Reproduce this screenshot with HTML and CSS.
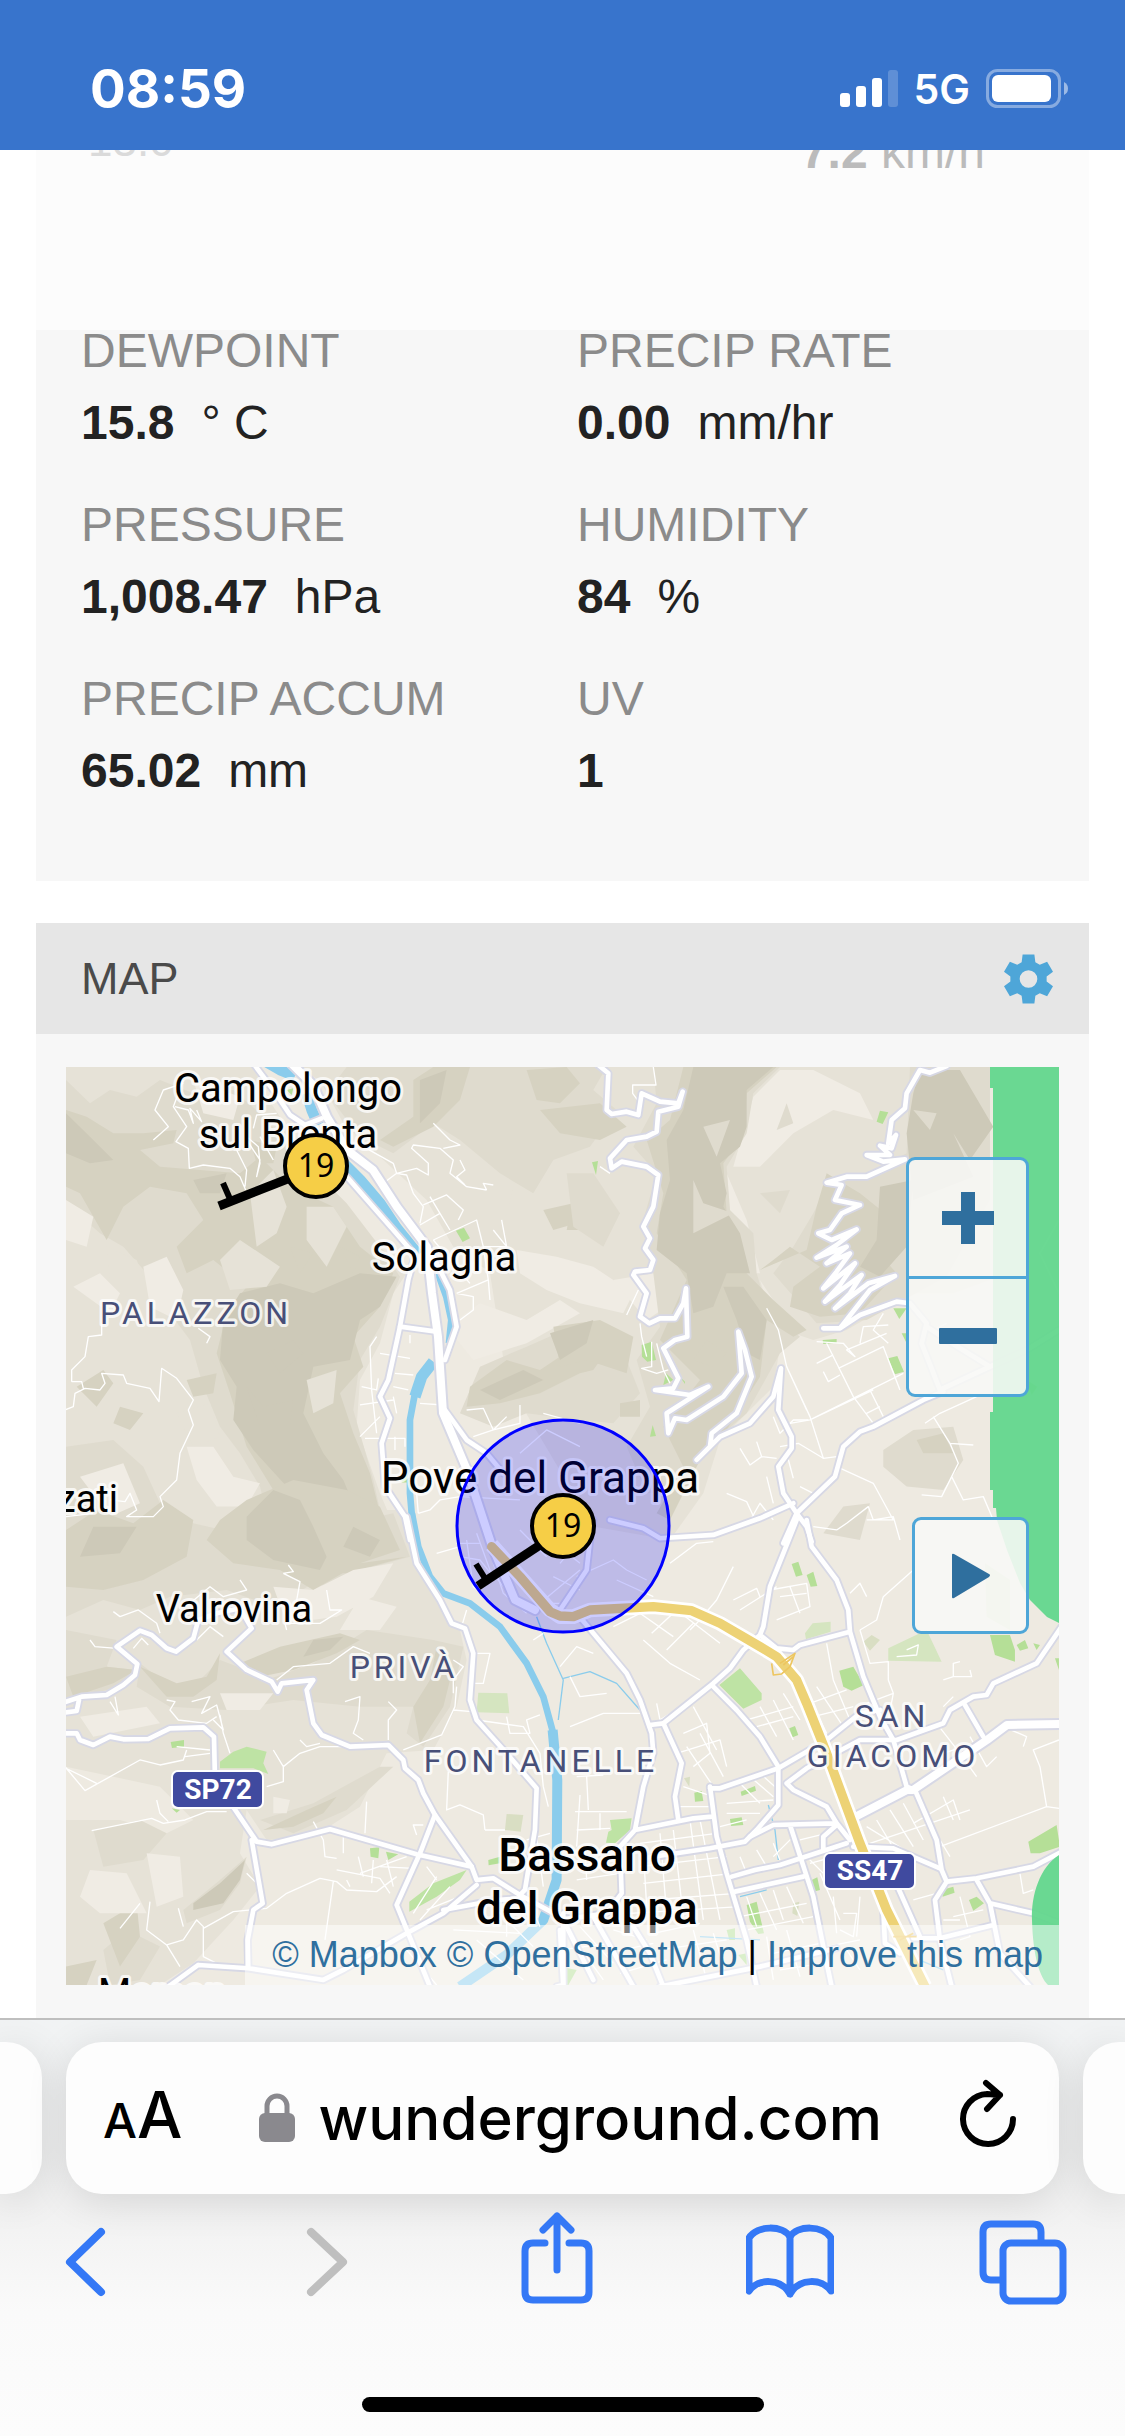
FILE: index.html
```html
<!DOCTYPE html>
<html lang="en">
<head>
<meta charset="utf-8">
<meta name="viewport" content="width=device-width, initial-scale=1">
<title>Weather station</title>
<link rel="stylesheet" href="styles.css">
</head>
<body>
<header class="status">
  <span class="clock">08:59</span>
  <div class="status-right">
    <svg class="signal" viewBox="0 0 58 38" aria-hidden="true"><rect x="0" y="23" width="10" height="14" rx="3"/><rect x="16" y="16" width="10" height="21" rx="3"/><rect x="32" y="8" width="10" height="29" rx="3"/><rect x="48" y="0" width="10" height="37" rx="3" opacity=".2"/></svg>
    <span class="network">5G</span>
    <svg class="battery" viewBox="0 0 83 40" aria-hidden="true"><rect x="1.500" y="1.500" width="72" height="36" rx="10" fill="none" stroke="#fff" stroke-opacity=".4" stroke-width="3"/><rect x="6" y="6" width="59" height="27" rx="6"/><path d="M78 13q4 2 4 6.500t-4 6.500z" opacity=".5"/></svg>
  </div>
</header>

<main class="page">
  <section class="conditions">
    <div class="summary">
      <span class="low">13.0</span>
      <span class="gust"><b>7.2</b> km/h</span>
    </div>
    <dl class="readings">
      <div><dt>DEWPOINT</dt><dd><b>15.8</b><span>° C</span></dd></div>
      <div><dt>PRECIP RATE</dt><dd><b>0.00</b><span>mm/hr</span></dd></div>
      <div><dt>PRESSURE</dt><dd><b>1,008.47</b><span>hPa</span></dd></div>
      <div><dt>HUMIDITY</dt><dd><b>84</b><span>%</span></dd></div>
      <div><dt>PRECIP ACCUM</dt><dd><b>65.02</b><span>mm</span></dd></div>
      <div><dt>UV</dt><dd><b>1</b></dd></div>
    </dl>
  </section>

  <section class="map-card">
    <div class="map-head">
      <h2>MAP</h2>
      <button class="gear" aria-label="Map settings"><svg viewBox="0 0 50 50"><path fill-rule="evenodd" d="M19 0h12l1 8 4.500 2.500L44 7.500l6 10-6.500 5v5l6.500 5-6 10-7.500-3L32 42l-1 8H19l-1-8-4.500-2.500L6 42.500l-6-10 6.500-5v-5L0 17.500l6-10 7.500 3L18 8zM25 16a9 9 0 1 0 0 18a9 9 0 1 0 0-18z"/></svg></button>
    </div>
    <div class="map-body">
      <div class="map">
        <svg class="map-art" viewBox="66 1067 993 918" preserveAspectRatio="xMidYMid slice" role="img" aria-label="Map of Bassano del Grappa">
          <defs>
            <g id="roads">
              <g transform="translate(60 1060) scale(.3333)">
                <path d="M580 10L640 90 690 165 735 195 785 175M860 350L1000 510 1065 585 1045 660 1020 800 985 960 960 1010 990 1075 965 1150 975 1280 1035 1370 1050 1440"/>
                <path d="M1120 590L1170 690 1190 800 1155 900M1020 800L1130 815M1155 1050L1220 1140 1280 1180 1330 1240"/>
              </g>
              <g transform="translate(560 1060) scale(.3333)">
                <path d="M115 15L145 40 140 150 155 162 200 155 235 165 245 100 300 125 355 130 368 95 355 140 295 155 290 215 260 230 200 240 150 295 155 325 185 305 260 320 295 345 280 440 250 500 270 535 255 565 280 600 270 630 225 635 220 645 260 700 240 770 268 790 300 775 345 775 370 730 378 685 382 830 345 840 310 865 355 955 340 985 285 990 390 1005 445 980 320 1060 325 1120 345 1075 380 1080 490 1010 545 940 535 815 555 870 575 950 530 1060 455 1120 450 1160 410 1200 480 1130 570 1090 640 1010 663 925 655 1050 695 1130 695 1165 655 1220 670 1300 710 1360 740 1400 755 1445"/>
                <path d="M1160 18L1110 38 1080 30 1040 100 1035 145 995 180 985 250 1008 225 995 265 960 257 990 285 920 285 970 305 1035 298 920 350 860 350 800 368 845 375 825 420 900 435 845 460 810 510 775 520 815 540 890 508 830 555 770 593 860 560 800 610 870 580 830 635 790 685 885 610 840 675 795 725 905 645 870 700 825 745 925 670 1005 648 930 690 840 805 790 805M840 805L900 765 1010 725 1050 730 1100 790 1085 850 1140 990 1290 920 1200 865 1100 800M1290 920L1400 870 1497 810"/>
                <path d="M150 1380L250 1405 300 1435 460 1425 600 1375 700 1330M1150 995L1090 1020 940 1100 900 1115 850 1160 825 1250 710 1360 670 1450"/>
              </g>
              <g transform="translate(60 1520) scale(.3333)">
                <path d="M1040 -10L1070 130 1140 240 1175 310 1215 325 1240 400 1230 540 1250 600 1340 700 1430 805 1425 930 1395 1110 1380 1125 1500 1190"/>
                <path d="M10 548L65 530 140 525 190 495 225 465 232 432 170 380 240 332 275 345 320 385 348 395 400 355 415 300 470 280 540 265 575 325 500 395 560 450 635 485 653 515 665 490 760 480 740 510 760 610 785 645 870 680 985 675 1030 720 1035 745 1075 780 1090 820 1125 885 1235 1040 1250 1080 1300 1075 1380 1125M10 578L50 573 57 540"/>
                <path d="M10 640L50 640 60 660 100 675 150 650 190 658 265 657 330 625 430 622 462 650 465 780 590 965 635 973 810 928 1070 1003 1235 1040M575 960L608 1150 580 1170 563 1260 565 1345M325 1400L415 1335 565 1345 790 1380 850 1350 1040 1240 1150 1180 1250 1095M1125 885L1080 1000 1010 1155 1110 1400M1150 1170L1310 1140 1390 1135M1510 1180L1510 1395 1490 1400"/>
              </g>
              <g transform="translate(560 1520) scale(.3333)">
                <path d="M710 0L630 200 610 320 600 345 550 390 510 445 460 490 310 610 270 615M740 0L755 80 830 180 865 270 870 335 910 470 960 590 1000 660 1040 800 1065 810 1130 960 1145 1050 1160 1085 1250 1075 1420 1040 1505 995M600 345L650 385 700 390 720 375 870 335"/>
                <path d="M50 280L200 460 240 540 275 640 280 700 250 800 225 930 180 980 185 1120 140 1180 0 1200M310 610L365 730 345 830 355 900M460 500L530 570 600 650 655 740 655 855 590 930 555 965 450 985 250 1015M225 930L400 895 455 890M450 800L470 950 500 1060 560 1260 590 1400"/>
                <path d="M450 805L480 805 655 745 800 660 900 580 960 570M680 790L740 745 900 660 1010 660 1150 610 1170 570 1240 530 1280 525 1300 490 1430 430 1505 320M680 790L700 810 800 860 830 910 870 960M570 950L640 915 825 910M690 915L760 1130 790 1280 815 1400M515 1070L585 1050 660 1035 860 970M525 1115L730 1070M790 990L790 950 830 915M880 980L1000 985 1140 1045"/>
                <path d="M1250 1080L1290 1150 1320 1300 1410 1400M1290 1150L1420 1180 1500 1210M1160 1085L1125 1140 1140 1260 1175 1400M1060 1255L1140 1255 1300 1215M1015 1105L1080 1250M970 1170L975 1270 1020 1300M300 1400L600 1340 830 1285M1215 555L1270 650M0 270L80 150 90 60 100 0M20 1220L100 1380M100 1190L220 1400M0 1230L10 1400M220 1220L270 1300 310 1400"/>
              </g>
            </g>
            <g id="trunk">
              <path d="M290 1062L313 1085 327 1117 347 1150 373 1170 397 1207 427 1247 432 1293 438 1337 443 1413 467 1470 492 1546 515 1600 535 1610"/>
              <path d="M855 1817L907 1790 913 1790 987 1740 1007 1725 1060 1724"/>
            </g>
          </defs>

          <rect x="66" y="1067" width="993" height="918" fill="#eeeae1"/>

          <!-- hillshade: the lightest slopes first, then the darker facets for each quarter of the map -->
          <g transform="translate(60 1060) scale(.3333)">
            <path class="t1" d="M18 21H1560V560L1440 560 1350 600 1300 640 1230 600 1180 560 1100 420 960 290 850 190 780 60 700 21 580 21 620 110 680 200 760 330 900 500 1040 640 1000 700 960 850 900 960 890 1100 960 1300 1020 1440H18z"/>
          </g>
          <g transform="translate(560 1060) scale(.3333)">
            <path class="t1" d="M-40 21H1290V660L1180 700 1050 700 860 810 760 840 700 820 640 720 600 660 660 860 640 980 560 1060 480 1140 430 1300 330 1440 100 1400 -90 1080 -160 960 -210 640z"/>
          </g>
          <g transform="translate(60 1520) scale(.3333)">
            <path class="t1" d="M18 -30H1030L1060 130 1130 240 1200 330 1220 420 1190 560 1120 690 980 700 900 860 760 950 620 960 560 870 540 1000 600 1100 520 1200 400 1330 300 1395H18V900L180 900 320 940 400 900 300 800 18 740z"/>
          </g>
          <g transform="translate(60 1060) scale(.3333)">
            <path class="t2" d="M18 60L90 130 150 90 230 110 300 60 400 100 520 90 600 160 690 260 780 350 860 430 960 560 1020 650 960 800 900 900 880 1050 940 1260 980 1440H640L600 1280 540 1180 480 1100 430 980 390 840 330 760 260 640 190 560 120 520 18 430z"/>
            <path class="t2" d="M860 21H1640L1600 90 1670 150 1590 260 1480 300 1420 400 1320 340 1200 240 1120 190 1000 280 900 230 800 100zM1200 1060L1260 920 1400 860 1560 790 1640 800 1700 900 1740 1000 1660 1090 1560 1080 1400 1060 1300 1100zM18 1160L160 1140 250 1220 300 1330 260 1440 200 1510 18 1480z"/>
            <path class="t3" d="M18 150L80 170 160 220 250 220 350 210 340 250 240 270 300 320 420 330 540 340 600 290 690 380 820 440 900 560 1000 640 960 740 880 830 910 920 840 1000 880 1120 930 1240 980 1440H700L640 1290 560 1160 510 1000 470 880 500 760 560 680 460 600 380 640 350 560 430 480 380 400 270 380 190 440 140 540 60 400 18 380z"/>
            <path class="t3" d="M1060 60L1120 21H1230L1200 120 1120 200 1000 260 960 240 1060 170zM1400 30L1520 21 1560 70 1500 130 1430 120zM1450 450L1540 430 1550 490 1480 510zM1230 980L1340 900 1440 930 1560 850 1650 860 1600 930 1560 940 1440 1000 1320 1030 1220 1040z"/>
            <path class="t4" d="M540 700L660 670 760 700 900 640 1010 650 960 740 900 780 870 900 760 920 730 1060 790 1180 850 1260 900 1380 940 1500 860 1540 780 1520 740 1440 680 1280 580 1170 520 1080 530 980 480 900 490 780zM18 160L90 230 160 300 90 310 18 280zM1080 60L1160 30 1140 130 1080 190z"/>
            <path class="t1" d="M570 400L640 330 680 440 650 520 590 560zM480 600L540 540 660 620 620 680 510 690zM740 440L820 440 860 500 800 620 740 540zM140 560L230 600 260 680 340 700 330 790 220 720 150 670zM740 960L830 930 820 1030 760 1060zM350 1060L450 1030 480 1130 400 1160z"/>
            <path class="t0" d="M18 420L100 470 80 560 18 540zM250 620L320 590 370 690 350 780 270 740zM40 680L120 640 180 700 150 760zM380 1160L460 1160 520 1250 600 1270 560 1340 470 1340 410 1260zM1370 570L1490 590 1600 620 1720 700 1690 760 1560 730 1460 690 1380 640zM1160 800L1260 730 1400 780 1500 720 1560 760 1400 850 1240 900zM400 60L540 110 520 180 430 160zM60 1250L190 1210 240 1330 150 1370z"/>
            <path class="t3" d="M380 960L470 940 460 1000 400 1010zM180 1040L250 1060 210 1110 160 1090zM50 980L130 930 160 970 110 1040zM570 240L650 260 640 310 590 310zM690 560L760 580 720 640zM840 560L900 590 880 640z"/>
            <path class="t4" d="M620 880L700 840 730 880 660 940zM560 980L610 1040 700 1020 690 1100 600 1100zM400 360L500 340 480 400 420 400zM1260 990L1390 930 1450 960 1320 1020z"/>
          </g>
          <g transform="translate(560 1060) scale(.3333)">
            <path class="t0" d="M540 250L580 110 660 30 760 30 900 100 940 180 820 150 700 220 600 320 520 320zM500 340L560 480 600 640 560 640 510 460zM160 660L280 640 350 720 260 780z"/>
            <path class="t2" d="M280 21H660L580 100 560 220 500 320 510 450 580 520 590 640 620 740 720 830 660 880 560 1060 430 1170 380 1290 260 1300 200 1160 270 1040 230 900 300 800 280 640 250 480 290 340 220 260 290 130zM1050 21H1290V420L1160 650 920 780 770 790 640 640 700 560 760 460 800 380 920 340 1040 280z"/>
            <path class="t3" d="M370 21H650L560 100 550 230 490 310 500 460 560 640 640 720 740 810 700 830 620 780 600 950 500 1110 420 1200 330 1380 290 1360 370 1220 310 1100 420 960 300 840 380 660 290 520 310 400 260 240 330 180zM-60 150L120 130 200 200 120 240 0 220zM-20 800L120 780 220 830 200 940 80 900 0 920zM30 460L110 430 180 460 100 510 20 510zM800 340L900 400 1000 480 940 560 1010 640 900 760 780 770 690 740 700 680 780 620 690 560 640 600 600 630 740 570 770 440z"/>
            <path class="t4" d="M400 21H640L560 90 560 200 540 260 480 310 500 400 490 440 540 520 570 640 500 640 460 740 400 760 380 640 290 570 300 460 330 360 320 240 370 150zM1080 30H1200L1300 200 1230 300 1180 220 1240 350 1060 420 1040 220 1060 100zM490 680L550 680 620 780 600 900 560 880 530 780zM960 380L1060 360 1040 560 960 650 900 620 950 540zM-30 820L100 780 80 850 0 900z"/>
            <path class="t2" d="M20 340L100 340 180 460 130 560 40 500zM680 130L700 190 650 210zM600 400L690 390 660 460zM400 360L430 430 520 460 400 520zM430 200L510 180 470 290zM1060 150L1130 160 1110 210zM970 1170L1060 1110 1180 1100 1210 1200 1150 1290 1040 1280 970 1220zM790 1420L850 1340 930 1330 900 1440z"/>
            <path class="t3" d="M1070 1140L1150 1120 1180 1180 1090 1180zM180 1030L240 1020 240 1070 180 1070zM440 840L500 880 460 920 400 900z"/>
          </g>
          <g transform="translate(60 1520) scale(.3333)">
            <path class="t2" d="M18 -20L120 20 260 -20 400 10 620 60 820 20 1000 -20 1050 110 940 140 840 210 760 190 640 260 500 210 330 230 240 270 130 240 18 290zM240 430L330 500 420 480 480 420 560 450 620 480 760 430 920 330 1120 360 1210 380 1170 560 1090 680 1040 640 1060 560 900 560 700 540 500 570 330 560 230 500zM18 330L170 360 140 440 230 450 180 500 18 540zM100 930L240 900 320 940 250 1020 130 1040zM370 1170L480 1080 560 1010 540 1090 480 1170 380 1210zM600 900L760 850 960 740 1000 740 860 870 700 940zM130 1290L200 1230 300 1280 240 1380 150 1395z"/>
            <path class="t3" d="M18 30L110 -30 220 10 310 -60 400 0 380 110 250 180 130 210 18 200zM480 0L560 -60 700 -120 860 -90 960 -40 1020 90 900 130 760 210 660 150 520 130 440 60zM540 430L660 380 840 340 900 360 830 400 700 450 600 470zM240 440L350 490 440 470 480 400 470 480 400 530 320 530zM18 470L140 440 230 450 160 490 40 530zM1060 560L1110 480 1130 380 1180 440 1150 560 1080 670zM780 160L900 130 1040 110 860 160zM130 1210L230 1150 240 1250 180 1340zM610 930L740 870 830 830 790 880 700 920zM18 1340L110 1320 80 1395H18z"/>
            <path class="t4" d="M560 -10L640 -90 720 -60 760 20 800 110 780 150 640 120 560 60zM100 20L230 20 180 100 60 110zM400 1150L480 1090 555 1020 540 1080 490 1150 400 1170zM760 360L850 350 810 390 730 410zM880 20L960 60 930 110 850 80z"/>
            <path class="t0" d="M640 200L760 210 880 150 1000 130 940 230 830 290 680 310zM90 1050L200 1060 260 1180 120 1180 60 1130zM260 1000L360 1010 370 1130 290 1160zM640 830L690 840 680 880 640 880zM60 590L260 560 300 610 100 650zM480 520L640 520 600 570 500 570zM900 230L1010 260 960 330 840 330z"/>
          </g>

          <!-- parks -->
          <g fill="#b5df97">
            <g transform="translate(60 1060) scale(.3333)"><path d="M1188 512L1212 503 1230 535 1208 546zM680 90L700 85 695 105zM1025 1240h22v28h-22z"/></g>
            <g transform="translate(560 1060) scale(.3333)"><path d="M960 152L985 157 968 192 950 185zM96 307L114 303 108 345zM788 840L830 837V848L790 852zM1000 745L1040 745 1018 777zM985 895L1012 888 1032 935 1005 943 970 860zM245 855L275 845 288 900 262 905 246 890zM278 1095L288 1128 270 1130zM318 940L340 960 310 975zM360 950L375 965V972zM1025 820H1040V850zM1400 960L1432 980 1415 1005z"/></g>
            <g transform="translate(60 1520) scale(.3333)"><path d="M332 666L372 660V680L336 684zM930 985L958 982 955 1015 932 1010zM978 995L1015 1003 985 1020zM1285 1020L1320 1010V1030L1286 1036zM335 865L360 870 350 878z"/><path fill="#bee3a4" d="M480 725L520 695 560 680 620 695 610 730 625 762 580 745 480 745zM1048 1145L1120 1090 1220 1050 1200 1080 1130 1130 1048 1175z"/><path fill="#d5e5c0" d="M1255 518L1342 520 1348 580 1250 577z"/><path fill="#d9dec3" d="M1340 882L1390 885 1382 935 1335 930z"/></g>
            <g transform="translate(560 1520) scale(.3333)"><path d="M695 132L715 125 728 165 708 170zM740 165L760 155 772 198 752 200zM838 452L880 440 912 495 875 512 850 500zM688 625L705 618 715 645 698 652zM403 818L425 813 430 843 405 845zM542 815L585 798 588 812 545 828zM510 897L545 892 550 915 513 918zM755 1080L772 1072 780 1110 760 1115zM560 1155L590 1145 612 1240 595 1242 570 1205zM1145 1110L1180 1100 1184 1118 1148 1130zM1227 1140L1250 1130 1272 1150 1240 1172zM500 1230L525 1225V1260L508 1260zM535 1305L560 1300V1335zM0 1340L50 1350 25 1395H0zM1290 345H1350L1365 390 1365 425 1305 405zM1370 375L1395 360 1405 385 1380 392zM1420 370L1440 375 1430 390zM1405 965L1490 915 1500 980 1440 1000 1412 1000zM1485 415H1497V450z"/><path fill="#bee3a4" d="M478 495L540 445 605 520 605 540 550 566zM150 900L215 895 210 930 165 970 138 968 145 935 155 930z"/><path fill="#d5e5c0" d="M985 385L1100 330 1145 425 985 422zM735 340L758 310 812 305V335L738 358zM1275 130L1350 180 1350 330 1280 290z"/><path fill="#d9dec3" d="M910 365L935 345 960 360 930 392zM700 1150L718 1145 712 1188 697 1180zM372 775L390 770 388 800z"/></g>
          </g>

          <!-- water -->
          <g class="water">
            <g transform="translate(60 1060) scale(.3333)"><path stroke-width="32" d="M600 -5L660 30 705 48 M740 100L755 150 775 195"/><path stroke-width="34" d="M850 310L900 360 960 430 1010 505 1075 585"/><path stroke-width="22" d="M1135 640L1160 710 1175 780 1168 850"/><path stroke-width="34" d="M1120 905L1085 950 1065 1010"/><path stroke-width="20" d="M1065 1000L1050 1080 1050 1300 1062 1440"/></g>
            <g transform="translate(60 1520) scale(.3333)"><path stroke-width="20" d="M1056 -20L1075 80 1110 170 1150 220 1230 250 1320 320 1400 430 1450 530 1480 640"/><path stroke-width="30" d="M1478 630L1492 780 1490 1080 1450 1200 1340 1305 1200 1400"/><path stroke-width="4" d="M1430 290L1460 370 1510 480 1495 600M1510 475L1590 455 1670 490 1740 570"/></g>
            <g transform="translate(560 1520) scale(.3333)"><path stroke-width="4" d="M625 855L645 930 655 1020M540 1130L620 1110M420 1250L600 1260M1030 1300L1150 1350"/></g>
          </g>

          <!-- side streets -->
          <g class="minor">
            <g transform="translate(60 1060) scale(.3333)">
              <path d="M370 70L310 90 285 150 325 200 280 240M370 60L340 140 380 200 348 245 385 265 388 325 430 315 510 325 540 350 557 390M345 140L385 150 400 190 390 145 425 185 410 150M530 270L560 330 555 380M560 230L595 260 600 310 590 350 600 300 560 240M600 230L640 300M650 160L590 165 580 205"/>
              <path d="M15 1050L40 1040 45 1000 75 985 120 990 135 970 125 940 190 945 200 970 270 985 297 1025 305 925 350 955 400 1020 385 1050 400 1095 360 1180 350 1260 300 1310 310 1340 280 1370 200 1370 230 1350 210 1300 195 1325 150 1320M35 965L35 930 75 890 85 830 125 825 125 790M415 805L450 830 440 850M35 965L65 965 70 985M18 1370L100 1360"/>
              <path d="M910 260L1000 310 1010 340 970 370M1010 340L1040 345 1060 400 1090 440 1080 490M1010 340L1070 325 1105 345 1105 310 1055 265 1060 255 1140 265 1180 300 1170 340 1220 380 1280 390M1120 190L1170 240 1200 255 1150 265M1090 435L1160 405 1210 450 1195 480M1080 495L1140 460 1110 410M1140 460L1170 510M1120 540L1250 480 1270 560 1340 560 1300 510M1340 560L1325 480M1270 560L1285 660 1290 720M1120 540L1230 670M1190 700L1240 710 1240 750 1200 780M1285 660L1190 700M1280 390L1270 370 1300 375M1200 300L1215 330 1190 350 1215 375"/>
              <path d="M950 830L930 860 935 990 950 1120M900 1035L1000 1020M960 880L1050 895M1050 825V850M905 980L950 990 955 955M1005 940L1060 945M1000 980L1045 990M1000 1010L1010 1060M900 1130L960 1070M915 1135L1035 1135V1160M1005 1130V1170M1075 1360L1110 1350 1140 1320 1200 1310 1380 1320M1080 1030L1150 1035M1220 1050L1270 1045 1300 1110 1380 1090 1380 1035M1240 1130L1300 1110 1340 1070M1075 1360L1070 1300M1450 1060L1560 1090M1380 1180L1460 1110 1560 1160"/>
            </g>
            <g transform="translate(560 1060) scale(.3333)">
              <path d="M280 21L288 75H218V100L240 130M120 320L150 340M235 690L200 765M240 790L245 830 260 890M275 845L275 920 245 925 290 940 325 930M290 850L310 930 330 970"/>
              <path d="M620 745L655 810 680 920 750 1070 790 1195M680 920L740 1050M690 1090L750 1080 1030 940M750 1080L940 990M770 845L850 850 885 890 860 870 980 820M800 850L880 1010 940 1090M770 910L820 885M790 935L805 965 840 945M835 925L970 860 1020 990M900 850L910 800 985 795M930 990L970 1070M920 1060L960 1040M970 760L940 810 985 850"/>
              <path d="M1120 1070L1170 1150 1240 1155M1170 1150L1195 1210 1175 1250 1210 1320 1270 1310 1300 1380M1175 1250L1145 1310 1085 1305M1095 1090L1140 1060 1250 1010M640 1070L660 1120 700 1080 745 1080M660 1160L715 1150 790 1195 830 1190M540 1165L570 1215 605 1190 650 1195M590 1145L605 1190M500 1300L560 1325 590 1390M620 1250L640 1330M680 1180L700 1255M830 1220L940 1270 1000 1380 920 1380M560 1400L600 1330 640 1380M720 1280L760 1300M760 1400L830 1410 860 1390 925 1340 940 1380 1000 1370 1020 1440M1160 790L1100 820M1497 480L1440 580 1497 700"/>
            </g>
            <g transform="translate(60 1520) scale(.3333)">
              <path d="M160 275L180 290 235 270 290 310 300 340M90 360L105 380 170 385M220 385L245 355 265 375M390 250L450 200 490 230 560 210 540 180M670 160L720 185 705 270M685 135L700 155 670 160M800 210L810 270 845 270 780 310 675 310 680 330M410 360L450 320 490 350M150 545L175 585 165 530M320 540L345 545 330 570 355 600 440 610 470 590M395 545L450 530 425 580 470 555 490 630 460 600M480 585L490 640 510 700M650 480L700 440 810 430 880 380 930 400M855 545L900 530 895 600 880 640 910 660M985 545L1010 570 985 600V660M720 660L740 680 780 670M1030 690L1145 645 1185 560 1190 500M1180 570L1235 575"/>
              <path d="M15 740L75 812 240 720 300 735 370 720 380 690M18 745L110 790M95 932L275 895 310 910 375 900 440 875 500 875M640 690L670 740V785L620 800M670 740L720 700 780 680 850 680M290 840L300 880 325 905M350 680L450 690M375 710L450 700M1165 755L1160 870 1200 855 1270 885 1275 930M1070 945L1060 915H1090M920 845L915 940M1275 930L1335 930"/>
              <path d="M180 1225L240 1150M270 1145L260 1230 320 1275 370 1260 410 1200 430 1220V1310L470 1330M355 1165L370 1220M320 1275L360 1340M430 1225L520 1175 620 1165 680 1120 780 1075 830 1085 860 1110 950 1115 1010 1070M820 1085L795 1260M760 905L790 960 795 1010 830 1015M850 950V1000M830 1050L960 1075 990 1120M860 1080L870 1100M895 1010L910 1070M940 1020L935 1090M980 1020L1000 1100M1040 1010L900 1060M1060 1045L960 1040M1100 1040L1130 1080M560 1060L600 1100"/>
              <path d="M1340 590L1350 640 1410 640 1400 600 1440 585M1250 400H1290L1270 490H1240M1220 270L1205 320M1190 70H1260M1130 100L1200 80M1180 420L1210 440 1180 480V520M1250 600L1390 620 1440 700 1450 800 1465 860M1060 1180L1130 1070M1080 1200L1170 1100M1100 1170L1250 1110M1040 1290L1130 1395M1180 1230L1380 1240M1250 1260L1390 1380M1300 1160L1420 1280M1340 1160V1250M1400 1130L1440 1220M1430 950L1450 1100M1400 960L1470 940M1420 360L1450 340"/>
              <path d="M1220 60L1240 200 1290 240M1200 110L1260 120 1300 170M1250 40L1290 150 1380 260 1450 250 1500 250M1300 130L1330 220 1400 280M1500 130L1560 60M1480 170L1560 210M1380 30L1460 110M1440 250L1560 150"/>
            </g>
            <g transform="translate(560 1520) scale(.3333)">
              <path d="M520 140L470 240 410 310 390 330M330 130L410 70 460 65M520 240L590 205 600 230M540 270L650 200M630 210L740 190 750 260 650 300M690 200L720 280M660 230L740 220M275 340L350 270 480 370M320 390L400 310M250 360L330 430 420 480M160 320L240 280 340 350M30 470L60 530 140 520M30 620L130 580 240 580M0 440L50 380 100 400M290 550L300 600 340 575M400 560L470 690M370 640L440 610 450 700 400 740M350 700L480 660 500 740M380 680L460 800M420 640L490 770"/>
              <path d="M900 330L930 430 985 425V480L1000 520 985 600M870 220L900 190 920 230M1060 150L970 230 950 300 900 330M1010 410L1070 405 1075 375 1040 390M1150 480L1180 470 1180 430 1200 425M1180 470H1235L1230 450M1180 530L1150 560M560 600L700 560M590 620L700 590M600 560L650 650M640 540L700 660M670 520L720 600M740 520L800 640M770 500L850 620M800 370L820 480 870 600M750 550L860 510M760 590L880 560M920 550L1000 520"/>
              <path d="M50 770L130 765M60 825L50 980M45 875H200M50 930L150 925M80 770L85 870M120 880V930M60 1040L180 1010M50 1080L180 1060M75 980L80 1080M250 990L260 1160M300 940L320 1180M340 930L370 1190M390 900L430 1200M420 900L480 1200M240 1040L500 1010M250 1090L520 1060M270 1140L530 1120M210 1180L540 1160M240 970L470 940M370 800L460 830M340 860L460 860M500 850L640 840M500 880L600 880M480 920L560 900M530 780L600 850M570 770L640 830M600 760L645 800"/>
              <path d="M540 1010L560 1060M590 990L620 1040M640 970L660 1020M700 950L640 1010M720 960L800 940M730 1000L800 1070M560 1130L590 1220M600 1120L650 1230M640 1110L670 1200M680 1100L730 1210M540 1190L740 1150M560 1230L760 1190M750 1030L860 1000M780 1060L840 1200M820 1130L830 1240M850 1180L890 1180 880 1250 840 1230M800 1280L900 1260M900 1130L890 1250M860 1290L900 1350"/>
              <path d="M920 920L1050 1000M950 900L1010 1000M990 870L1060 980M1030 850L1090 960M930 970L1230 870M1060 910L1180 840 1200 900M1150 830L1180 900M1140 980L1460 860 1497 865M1460 860L1440 740 1420 690 1497 660M1330 620L1400 650 1390 680M1170 1010L1140 960M1130 610L1200 700 1250 770M1230 650L1280 740 1310 710M1150 700L1210 680M1380 1060L1390 1120 1420 1110M1180 1190L1270 1170M1200 1130L1230 1250 1200 1260M1150 1200H1200M1060 1140L1130 1120"/>
              <path d="M30 1240L130 1380M60 1220L160 1330M0 1290L150 1270M160 1230L260 1260M140 1300L280 1270M180 1360L320 1320M280 1240L420 1210M300 1290L500 1260M400 1230L440 1380M460 1240L500 1370M620 1250L640 1380M680 1230L720 1370M640 1300L780 1270M660 1350L790 1330M30 100L90 60M50 170L160 120 200 150 260 180M170 180L280 230M10 90L60 130"/>
            </g>
          </g>

          <use href="#roads" class="casing"/>
          <use href="#trunk" class="trunk-casing"/>
          <use href="#roads" class="road"/>
          <use href="#trunk" class="trunk"/>

          <g transform="translate(560 1520) scale(.3333)" fill="none" stroke-linejoin="round">
            <path stroke="#fff" stroke-width="44" d="M-205 75L-120 170 -30 270 0 290 40 290 90 270 280 260 395 272 480 310 600 380 650 410 710 480 740 550 800 700 900 970 980 1170 1095 1400"/>
            <path stroke="#edd275" stroke-width="28" stroke-linecap="round" d="M-205 80L-120 170 -30 275 0 288 40 290 90 270 280 260 395 272 480 310 600 380 650 410 710 480 740 550 800 700 900 970 980 1170 1095 1400"/>
            <path stroke="#edc660" stroke-width="5" d="M635 430L640 465 665 462 690 440 M660 430L705 400 690 440M670 435L700 410M1000 1250H1070M1020 1260L1060 1240"/>
          </g>

          <!-- precipitation -->
          <g class="rain">
            <path d="M990 1067H1059V1623L1047 1617 1030 1600 1020 1583 1007 1550 997 1520 996 1508 993 1508V1490H990V1412H993V1088H990z"/>
            <path d="M1059 1855C1040 1867 1031 1895 1032 1920C1033 1957 1040 1977 1048 1985H1059z"/>
          </g>

          <g class="town">
            <text x="288" y="1102">Campolongo</text>
            <text x="288" y="1148">sul Brenta</text>
            <text x="444" y="1271">Solagna</text>
            <text x="540" y="1493" class="town-mid">Pove del Grappa</text>
            <text x="234" y="1622" class="town-small">Valrovina</text>
            <text x="78" y="1512" class="town-small">zzati</text>
            <text x="162" y="2006" class="town-small">Marsan</text>
            <text x="587" y="1871" class="city">Bassano</text>
            <text x="587" y="1924" class="city">del Grappa</text>
          </g>
          <g class="area">
            <text x="196" y="1324">PALAZZON</text>
            <text x="404" y="1678">PRIVÀ</text>
            <text x="541" y="1772">FONTANELLE</text>
            <text x="892" y="1727">SAN</text>
            <text x="893" y="1767">GIACOMO</text>
          </g>
          <g class="shield">
            <rect x="172" y="1771" width="91" height="37" rx="6"/><text x="218" y="1799">SP72</text>
            <rect x="824" y="1853" width="91" height="36" rx="6"/><text x="870" y="1880">SS47</text>
          </g>

          <circle class="focus" cx="563" cy="1526" r="106"/>
          <g class="barb">
            <path d="M290 1178L219 1206"/><path class="tick" d="M230 1199L223 1183"/>
            <path d="M540 1545L478 1586"/><path class="tick" d="M486 1580L476 1564"/>
          </g>
          <g class="station">
            <circle cx="316" cy="1166" r="31"/><text x="316" y="1177">19</text>
            <circle cx="563" cy="1526" r="31"/><text x="563" y="1537">19</text>
          </g>
        </svg>
        <div class="zoom">
          <button aria-label="Zoom in"><svg width="52" height="52" viewBox="0 0 52 52"><path d="M19 0h14v19h19v14H33v19H19V33H0V19h19z"/></svg></button>
          <button aria-label="Zoom out"><svg width="58" height="16" viewBox="0 0 58 16"><rect width="58" height="16" rx="1"/></svg></button>
        </div>
        <button class="play" aria-label="Play"><svg width="40" height="46" viewBox="0 0 40 46"><path d="M1 2q0-2 2-1l35 20q2 1 0 3L3 45q-2 1-2-1z"/></svg></button>
        <div class="credits"><a href="#mapbox">© Mapbox</a> <a href="#osm">© OpenStreetMap</a> | <a href="#improve">Improve this map</a></div>
      </div>
    </div>
  </section>
</main>

<footer class="browser">
  <div class="tabs">
    <div class="tab peek-left"></div>
    <div class="tab current">
      <button class="reader" aria-label="Page settings"><small>A</small>A</button>
      <button class="address">
        <svg width="36" height="50" viewBox="0 0 36 50" aria-hidden="true"><rect y="20" width="36" height="29" rx="6" fill="#8a898e"/><path d="M8 22V13a10 10 0 0 1 20 0v9" fill="none" stroke="#8a898e" stroke-width="5"/></svg>
        <span>wunderground.com</span>
      </button>
      <button class="reload" aria-label="Reload"><svg width="58" height="70" viewBox="0 0 58 70"><path d="M28 15A25 25 0 1 0 54 40M27 4L41 16 28 30M41 16L28 15" fill="none" stroke="#000" stroke-width="6" stroke-linecap="round" stroke-linejoin="round"/></svg></button>
    </div>
    <div class="tab peek-right"></div>
  </div>
  <nav class="tools">
    <button aria-label="Back"><svg viewBox="0 0 88 94"><path d="M54 20L23 50 54 80" stroke-width="8"/></svg></button>
    <button class="off" aria-label="Forward" disabled><svg viewBox="0 0 88 94"><path d="M31 20L63 50 31 80" stroke-width="8"/></svg></button>
    <button aria-label="Share"><svg viewBox="0 0 88 94"><path d="M32 31H20q-8 0-8 8V80q0 8 8 8H68q8 0 8-8V39q0-8-8-8H56M44 58V4M30 18L44 4 58 18"/></svg></button>
    <button aria-label="Bookmarks"><svg viewBox="0 0 88 94"><path d="M44 25V82M3 79V26C11 13 37 13 44 25C51 13 77 13 85 26V79C76 66 53 66 44 82C35 66 12 66 3 79z"/></svg></button>
    <button aria-label="Tabs"><svg viewBox="0 0 88 94"><path d="M22 68H12q-8 0-8-8V20q0-8 8-8H54q8 0 8 8V30"/><rect x="24" y="31" width="60" height="58" rx="8"/></svg></button>
  </nav>
  <div class="home-bar"></div>
</footer>
</body>
</html>
```
FILE: styles.css
```css
* { box-sizing: border-box; }
body { margin: 0; min-height: 100vh; display: flex; flex-direction: column; background: #fff; color: #222; font-family: "Liberation Sans", Arial, sans-serif; }
button { border: 0; padding: 0; margin: 0; background: none; color: inherit; font: inherit; display: flex; align-items: center; justify-content: center; }
svg { display: block; }
h2, dl, dt, dd { margin: 0; font-weight: 400; }

.status { position: relative; z-index: 1; height: 150px; padding: 28px 56px 0 90px; background: #3874cc; color: #fff; display: flex; align-items: center; justify-content: space-between; font-family: Inter, sans-serif; font-weight: 600; }
.clock { font-size: 53px; font-weight: 700; }
.status-right { display: flex; align-items: center; }
.signal { width: 58px; height: 38px; fill: #fff; }
.network { font-size: 41px; line-height: 48px; margin: 0 16px; }
.battery { width: 83px; height: 40px; fill: #fff; }

.page { flex: 1 0 auto; padding: 0 36px; }
.conditions { background: #f7f7f7; padding-bottom: 29px; }
.summary { margin-top: -50px; height: 230px; padding: 8px 104px 0 52px; background: #fcfcfc; display: flex; justify-content: space-between; align-items: flex-start; }
.low { font-size: 44px; line-height: 66px; color: #dadada; }
.gust { font-size: 48px; line-height: 88px; color: #bbb; }
.readings { display: grid; grid-template-columns: 496px 1fr; padding-left: 45px; }
.readings div { height: 174px; }
.readings dt { font-size: 48px; line-height: 42px; color: #8b8b8b; }
.readings dd { font-size: 48px; line-height: 60px; margin-top: 21px; display: flex; gap: 27px; }

.map-card { margin-top: 42px; background: #f7f7f7; }
.map-head { height: 111px; padding: 0 36px 0 45px; background: #e6e6e6; display: flex; align-items: center; justify-content: space-between; }
.map-head h2 { font-size: 45px; line-height: 52px; color: #4a4a4a; }
.gear svg { width: 49px; height: 50px; fill: #4ea6d8; }
.map-body { padding: 33px 30px; }
.map { position: relative; overflow: hidden; }
.map-art { width: 100%; height: auto; }

.t0 { fill: #f0ece4; }
.t1 { fill: #e6e2d7; }
.t2 { fill: #dfdbce; }
.t3 { fill: #d6d2c1; }
.t4 { fill: #cdc9b8; }
.water { fill: none; stroke: #8accec; stroke-linejoin: round; }
.minor { fill: none; stroke: #fff; stroke-width: 4; stroke-linejoin: round; }
.casing, .road, .trunk, .trunk-casing { fill: none; stroke-linejoin: round; stroke-linecap: round; }
.casing { stroke: #d7d8e5; stroke-width: 25; }
.road { stroke: #fff; stroke-width: 14; }
.trunk-casing { stroke: #d7d8e5; stroke-width: 12; }
.trunk { stroke: #fff; stroke-width: 8; }
.rain { fill: #62d78c; fill-opacity: .94; }

.town, .area, .shield { font-family: Roboto, sans-serif; text-anchor: middle; }
.town text, .area text { paint-order: stroke; stroke: #fff; stroke-opacity: .75; stroke-width: 6px; stroke-linejoin: round; }
.town { font-size: 40px; fill: #000; }
.town-mid { font-size: 44px; }
.town-small { font-size: 38px; }
.city { font-size: 46px; font-weight: 500; }
.area { font-size: 32px; letter-spacing: 4px; fill: #484f78; }
.shield { font-size: 28px; font-weight: 700; fill: #fff; }
.shield rect { fill: #404a9f; stroke: #fff; stroke-width: 2; }
.focus { fill: #00f; fill-opacity: .2; stroke: #00f; stroke-width: 3; }
.barb { stroke: #000; stroke-width: 9; }
.tick { stroke-width: 6; }
.station circle { fill: #f6ce46; stroke: #000; stroke-width: 4; }
.station text { font: 32px "Noto Sans", sans-serif; text-anchor: middle; }

.zoom, .play { position: absolute; right: 30px; border: 3px solid #4ea6d8; border-radius: 9px; background: rgba(248, 248, 246, .88); }
.zoom { top: 90px; width: 123px; height: 240px; display: flex; flex-direction: column; }
.zoom button { flex: 1; }
.zoom button + button { border-top: 3px solid #4ea6d8; }
.zoom svg, .play svg { fill: #2f6f9e; }
.play { top: 450px; width: 117px; height: 117px; }
.credits { position: absolute; right: 0; bottom: 0; padding: 0 16px 0 27px; font-size: 36px; line-height: 60px; color: #000; white-space: nowrap; background: rgba(255, 255, 255, .5); }
.credits a { color: #2f6f9e; text-decoration: none; }

.browser { height: 418px; border-top: 2px solid #bfbfbf; padding-top: 22px; overflow: hidden; background: linear-gradient(#f1f3f4, #f1f1f1 45%, #fafafa 70%, #fcfcfc); font-family: Inter, sans-serif; }
.tabs { display: flex; gap: 24px; }
.tab { height: 152px; border-radius: 36px; background: #fdfdfd; box-shadow: 0 6px 40px rgba(0, 0, 0, .12); }
.peek-left, .peek-right { width: 42px; }
.peek-left { border-radius: 0 36px 36px 0; }
.peek-right { border-radius: 36px 0 0 36px; }
.current { flex: 1; padding: 0 42px 0 37px; display: flex; align-items: center; justify-content: space-between; color: #000; }
.reader { font-size: 64px; line-height: 76px; font-weight: 500; align-items: baseline; }
.reader small { font-size: 48px; }
.address { gap: 23px; font-size: 60px; line-height: 72px; font-weight: 500; }
.reload { padding-bottom: 8px; }
.tools { display: flex; justify-content: space-between; padding: 18px 58px 0 47px; }
.tools svg { width: 88px; height: 94px; fill: none; stroke: #3478f6; stroke-width: 7; stroke-linecap: round; stroke-linejoin: round; }
.tools .off svg { stroke: #bfbfbf; }
.home-bar { width: 402px; height: 15px; margin: 91px auto 0; border-radius: 8px; background: #000; }
```
